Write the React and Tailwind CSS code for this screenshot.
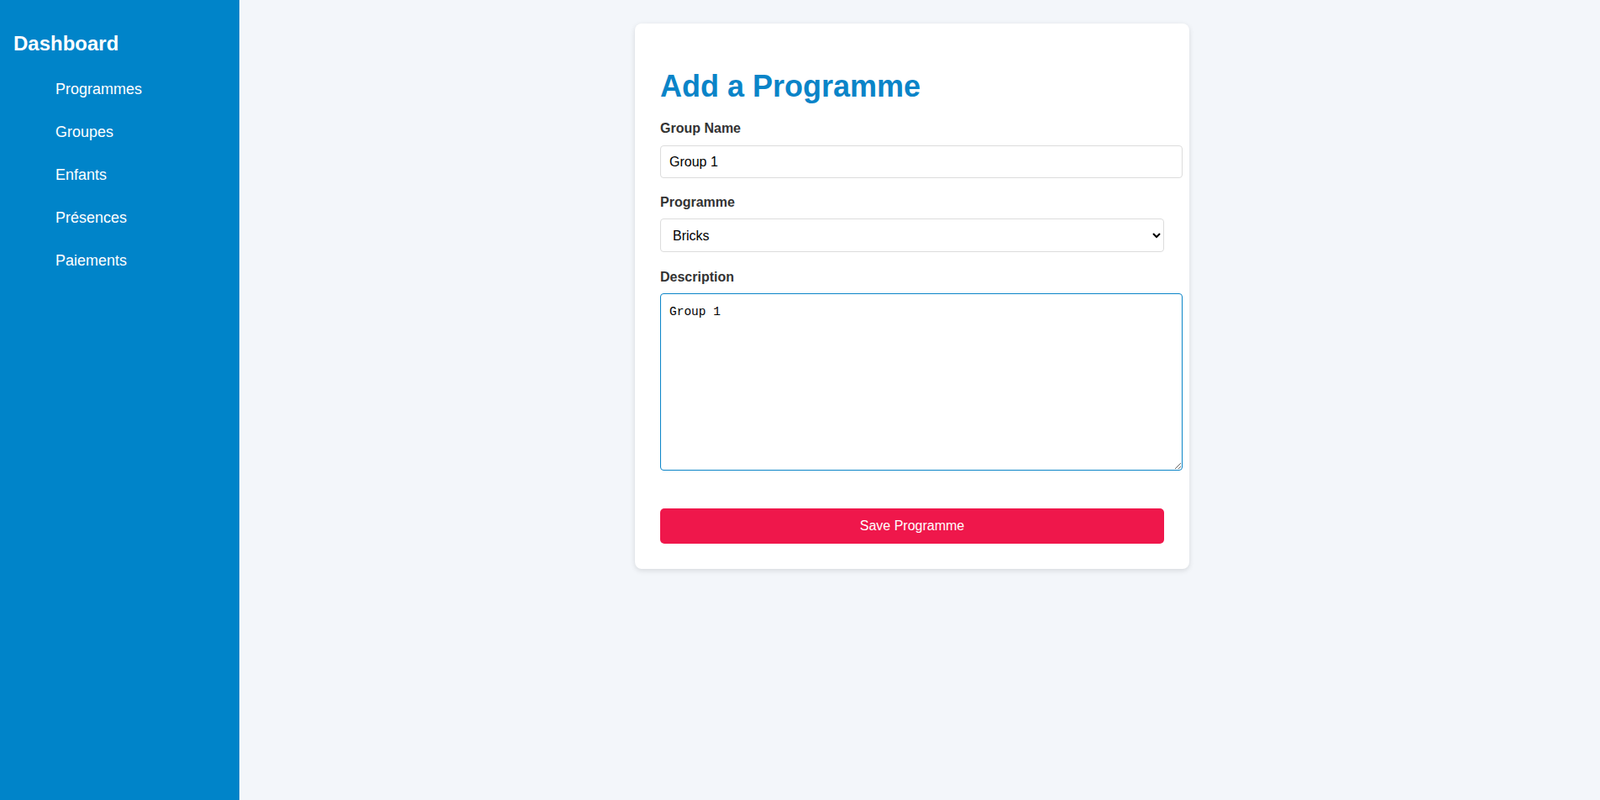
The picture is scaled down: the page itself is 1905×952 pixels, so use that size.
const navItems = ['Programmes', 'Groupes', 'Enfants', 'Présences', 'Paiements'];

export default function App() {
    return (
        <div className="flex h-[952px] font-['Liberation_Sans',Arial,sans-serif]">
            <aside className="w-[285px] shrink-0 bg-[#0084c9] px-4 pt-[38px] text-white">
                <h2 className="text-[24px] font-bold leading-[28px]">Dashboard</h2>
                <ul className="mt-[15px]">
                    {navItems.map((item) => (
                        <li key={item} className="py-[15px] pl-[50px] text-[18px] leading-[21px]">
                            <a href="#">{item}</a>
                        </li>
                    ))}
                </ul>
            </aside>

            <main className="flex flex-1 justify-center bg-[#f3f6fa] pr-[18px] pt-[28px]">
                <div className="h-fit w-[660px] rounded-lg bg-white px-[30px] pb-[30px] pt-[54px] shadow-[0_2px_6px_rgba(0,0,0,0.12)]">
                    <h1 className="mb-[18px] text-[36px] font-bold leading-[42px] text-[#0a84c8]">
                        Add a Programme
                    </h1>

                    <form onSubmit={(event) => event.preventDefault()}>
                        <label htmlFor="group_name" className="mb-[11px] block pt-[2px] text-[16px] font-bold leading-[18px] text-[#333]">
                            Group Name
                        </label>
                        <input
                            id="group_name"
                            type="text"
                            defaultValue="Group 1"
                            className="mb-[18px] block h-[39px] w-[622px] rounded border border-[#dcdcdc] px-[10px] text-[16px] text-black"
                        />

                        <label htmlFor="programme" className="mb-[10px] block pt-[2px] text-[16px] font-bold leading-[18px] text-[#333]">
                            Programme
                        </label>
                        <select
                            id="programme"
                            defaultValue="bricks"
                            className="mb-[19px] block h-[40px] w-[600px] rounded border border-[#dcdcdc] bg-white px-[10px] text-[16px] text-black"
                        >
                            <option value="bricks">Bricks</option>
                            <option value="robots">Robots</option>
                        </select>

                        <label htmlFor="description" className="mb-[10px] block pt-[2px] text-[16px] font-bold leading-[18px] text-[#333]">
                            Description
                        </label>
                        <textarea
                            id="description"
                            defaultValue="Group 1"
                            className="mb-[45px] block h-[211px] w-[622px] rounded border border-[#0a84c8] px-[10px] pb-[8px] pt-[12px] font-['Liberation_Mono',monospace] text-[14.5px] leading-[18px] text-black outline-none"
                        />

                        <button
                            type="submit"
                            className="block h-[42px] w-[600px] rounded-[5px] bg-[#ef174b] text-[16px] text-white"
                        >
                            Save Programme
                        </button>
                    </form>
                </div>
            </main>
        </div>
    );
}
